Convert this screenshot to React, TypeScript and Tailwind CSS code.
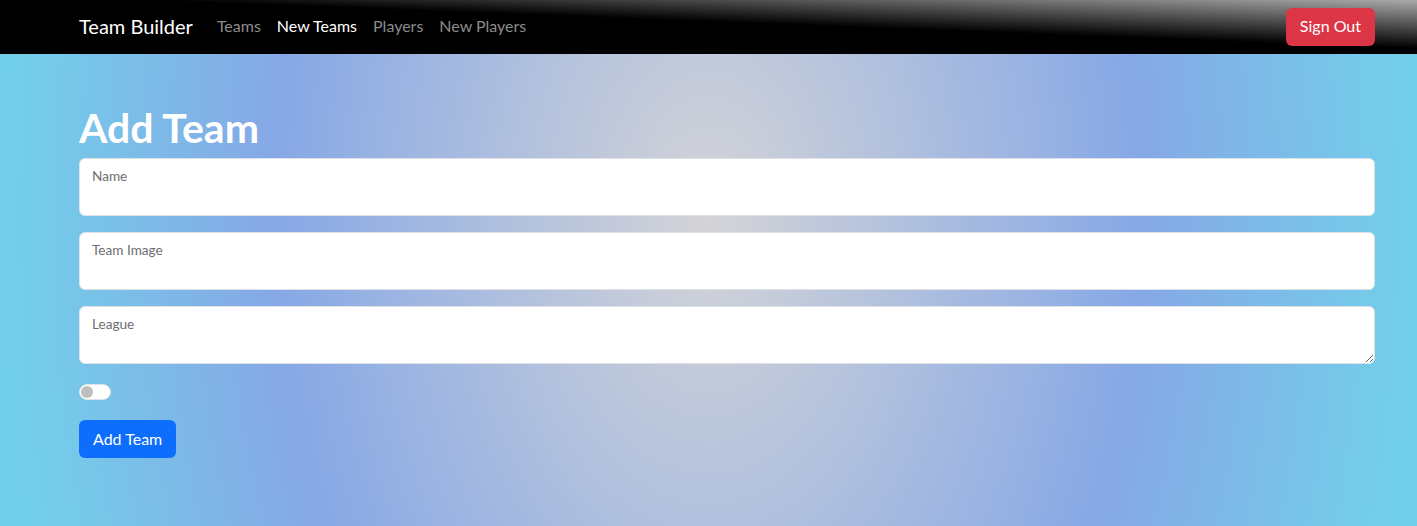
import React from "react";

const Field = ({ label, area }: { label: string; area?: boolean }) => {
  return (
    <div className="relative mb-4">
      {area ? (
        <textarea className="block w-full h-[58px] min-h-[58px] bg-white border border-[#dee2e6] rounded-[6px] resize-y outline-none" />
      ) : (
        <input className="block w-full h-[58px] bg-white border border-[#dee2e6] rounded-[6px] outline-none" />
      )}
      <label className="absolute left-[13px] top-[8px] text-[13.6px] leading-[20px] text-[#6c6e71] pointer-events-none">
        {label}
      </label>
    </div>
  );
};

const App = () => {
  return (
    <div className="w-[1417px] h-[526px] overflow-hidden flex flex-col font-['Lato',sans-serif]">
      <nav className="h-[54px] shrink-0 bg-[linear-gradient(to_bottom_left,#a9a9a9_0%,#000_45%)] flex items-center pl-[79px] pr-[42px]">
        <span className="text-[20px] text-white mr-4 pb-[2px]">Team Builder</span>
        <div className="flex items-center text-[16px] pb-[2px]">
          <a className="px-2 text-[#8c8c8c]">Teams</a>
          <a className="px-2 text-white">New Teams</a>
          <a className="px-2 text-[#8c8c8c]">Players</a>
          <a className="px-2 text-[#8c8c8c]">New Players</a>
        </div>
        <button className="ml-auto h-[38px] px-[14px] pb-[2px] rounded-[6px] bg-[#dc3545] text-white text-[16px]">
          Sign Out
        </button>
      </nav>
      <main className="flex-1 bg-[radial-gradient(ellipse_700px_1100px_at_50%_35%,#d4d4d7_0%,#86a8e6_62%,#72cfea_100%)]">
        <div className="ml-[79px] w-[1296px] pt-[50px]">
          <h1 className="text-[41px] leading-[48px] font-bold text-white mb-[6px]">Add Team</h1>
          <Field label="Name" />
          <Field label="Team Image" />
          <Field label="League" area />
          <div className="h-6 mb-4 flex items-start">
            <div className="mt-1 w-8 h-4 rounded-full bg-white border border-[#dee2e6] flex items-center px-[1px]">
              <div className="w-3 h-3 rounded-full bg-[#bfbfbf]" />
            </div>
          </div>
          <button className="h-[38px] px-[14px] pb-[1px] rounded-[6px] bg-[#0d6efd] text-white text-[16px]">
            Add Team
          </button>
        </div>
      </main>
    </div>
  );
};

export default App;
